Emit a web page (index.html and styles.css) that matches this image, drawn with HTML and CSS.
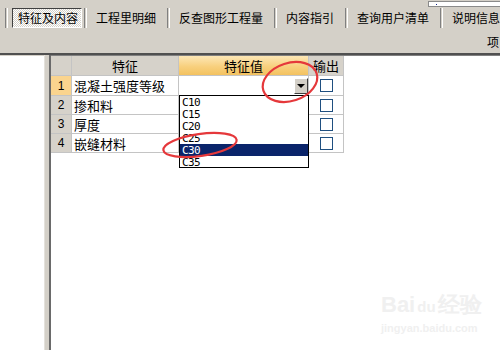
FILE: index.html
```html
<!DOCTYPE html>
<html>

<head>
  <meta charset="UTF-8">
  <title>特征及内容</title>
  <link rel="stylesheet" href="styles.css">
</head>

<body>
  <div class="window">

    <div class="toolbar">
      <div class="top_strip">
        <div class="mini_bar"><span class="mini_dot"></span></div>
      </div>
      <div class="tabs">
        <span class="sep"></span>
        <span class="tab tab_active">特征及内容</span>
        <span class="sep"></span>
        <span class="tab">工程里明细</span>
        <span class="sep"></span>
        <span class="tab">反查图形工程量</span>
        <span class="sep"></span>
        <span class="tab">内容指引</span>
        <span class="sep"></span>
        <span class="tab">查询用户清单</span>
        <span class="sep"></span>
        <span class="tab">说明信息</span>
      </div>
      <div class="sub_bar">项</div>
    </div>

    <div class="main">
      <div class="left_pane"></div>
      <div class="splitter"></div>
      <div class="grid_pane">
        <div class="sheet">
          <div class="cell head"></div>
          <div class="cell head">特征</div>
          <div class="cell head head_active">特征值</div>
          <div class="cell head">输出</div>

          <div class="cell num num_active">1</div>
          <div class="cell text">混凝土强度等级</div>
          <div class="cell value"><span class="drop_btn"></span></div>
          <div class="cell out"><span class="check"></span></div>

          <div class="cell num">2</div>
          <div class="cell text">掺和料</div>
          <div class="cell value"></div>
          <div class="cell out"><span class="check"></span></div>

          <div class="cell num">3</div>
          <div class="cell text">厚度</div>
          <div class="cell value"></div>
          <div class="cell out"><span class="check"></span></div>

          <div class="cell num">4</div>
          <div class="cell text">嵌缝材料</div>
          <div class="cell value"></div>
          <div class="cell out"><span class="check"></span></div>

          <div class="drop_list">
            <div class="drop_item">C10</div>
            <div class="drop_item">C15</div>
            <div class="drop_item">C20</div>
            <div class="drop_item">C25</div>
            <div class="drop_item drop_selected">C30</div>
            <div class="drop_item">C35</div>
          </div>
        </div>
      </div>
    </div>

    <svg class="marks" width="500" height="350" viewBox="0 0 500 350">
      <ellipse cx="290" cy="82" rx="28" ry="19" transform="rotate(-18 290 82)" />
      <ellipse cx="200" cy="145" rx="37" ry="11" transform="rotate(-8 200 145)" />
    </svg>

    <div class="watermark">
      <div class="wm_big">Bai<span class="wm_du">du</span>经验</div>
      <div class="wm_small">jingyan.baidu.com</div>
    </div>

  </div>
</body>

</html>
```

FILE: styles.css
```css
html,
body {
  margin: 0;
  padding: 0;
  width: 100%;
  height: 100%;
  overflow: hidden;
  background-color: white;
}

.window {
  position: relative;
  width: 500px;
  height: 350px;
  display: flex;
  flex-direction: column;
  font-family: "Noto Sans CJK SC", sans-serif;
  color: black;
}

.toolbar {
  height: 53px;
  flex: none;
  background-color: #d4d0c8;
  border-bottom: 2px solid #505050;
  display: flex;
  flex-direction: column;
}

.top_strip {
  height: 8px;
  display: flex;
  justify-content: flex-end;
  align-items: flex-start;
}

.mini_bar {
  width: 71px;
  height: 4px;
  margin-top: 1px;
  border: 1px solid #8a8a8a;
  border-right: none;
  background-color: white;
  display: flex;
  align-items: center;
}

.mini_dot {
  width: 1px;
  height: 1px;
  margin-left: 7px;
  background-color: #1a2a8a;
}

.tabs {
  height: 20px;
  display: flex;
  align-items: center;
  padding-left: 5px;
  font-size: 12px;
  white-space: nowrap;
}

.sep {
  width: 1px;
  height: 20px;
  border-left: 1px solid #808080;
  border-right: 1px solid white;
  flex: none;
}

.tab {
  padding: 0 11px 0 9px;
  line-height: 20px;
}

.tab_active {
  margin: 0 2px 0 4px;
  padding: 0 3px 0 5px;
  height: 18px;
  line-height: 18px;
  border: 1px solid;
  border-color: #404040 white white #404040;
  background: repeating-conic-gradient(white 0 25%, #d4d0c8 0 50%) 0 0 / 2px 2px;
}

.sub_bar {
  flex: 1;
  display: flex;
  justify-content: flex-end;
  align-items: center;
  padding-top: 2px;
  padding-right: 1px;
  font-size: 12px;
}

.main {
  flex: 1;
  display: flex;
  background-color: #d4d0c8;
}

.left_pane {
  width: 44px;
  margin-top: 1px;
  background-color: white;
}

.splitter {
  width: 4px;
  border-left: 1px solid #e4e1db;
  border-right: 2px solid #6a6a6a;
}

.grid_pane {
  flex: 1;
  background-color: white;
  border-top: 1px solid #808080;
}

.sheet {
  position: relative;
  display: grid;
  grid-template-columns: 20px 106px 129px 34px;
  grid-template-rows: 19px 19px 18px 18px 18px;
  gap: 1px;
  padding: 0 1px 1px 0;
  width: max-content;
  background-color: #c4c4c4;
  font-size: 13px;
}

.cell {
  background-color: white;
  display: flex;
  align-items: center;
  overflow: hidden;
  white-space: nowrap;
}

.head {
  background-color: #d6d2ca;
  justify-content: center;
}

.head_active {
  background: linear-gradient(#fde7b6, #f8d07e 55%, #f3c260);
}

.num {
  background-color: #d6d2ca;
  justify-content: center;
  font-family: "Liberation Sans", sans-serif;
  font-size: 12px;
}

.num_active {
  background-color: #fad48e;
}

.text {
  padding-left: 2px;
}

.value {
  justify-content: flex-end;
}

.drop_btn {
  width: 12px;
  height: 14px;
  border: 1px solid;
  border-color: white #404040 #404040 white;
  background-color: #d4d0c8;
  display: flex;
  justify-content: center;
  align-items: center;
}

.drop_btn::after {
  content: "";
  border-left: 4px solid transparent;
  border-right: 4px solid transparent;
  border-top: 4px solid black;
}

.out {
  justify-content: center;
}

.check {
  width: 11px;
  height: 11px;
  border: 1px solid #1f4f80;
  background-color: white;
}

.drop_list {
  position: absolute;
  left: 128px;
  top: 39px;
  width: 130px;
  height: 73px;
  box-sizing: border-box;
  border: 1px solid black;
  background-color: white;
  overflow: hidden;
  font-family: "DejaVu Sans Mono", monospace;
  font-size: 11px;
  letter-spacing: -0.6px;
}

.drop_item {
  height: 12px;
  line-height: 13px;
  padding-left: 2px;
}

.drop_selected {
  background-color: #0a246a;
  color: white;
}

.marks {
  position: absolute;
  left: 0;
  top: 0;
  pointer-events: none;
}

.marks ellipse {
  fill: none;
  stroke: #e5383b;
  stroke-width: 2.2;
}

.watermark {
  position: absolute;
  left: 381px;
  top: 291px;
  color: #f0f0f0;
  font-family: "Liberation Sans", sans-serif;
  font-weight: bold;
  pointer-events: none;
}

.wm_big {
  font-size: 22px;
  line-height: 28px;
}

.wm_du {
  font-size: 15px;
  margin: 0 2px;
}

.wm_small {
  font-size: 11px;
  line-height: 14px;
}
```
